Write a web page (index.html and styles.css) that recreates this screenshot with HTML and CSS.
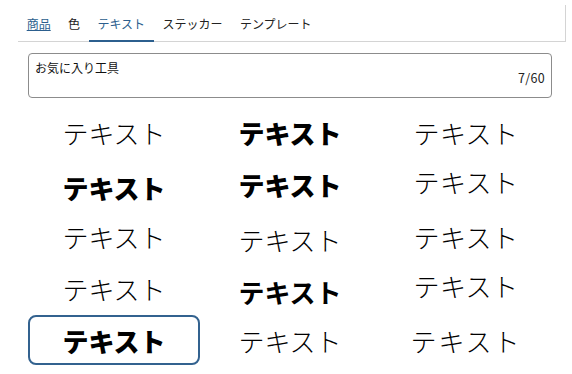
FILE: index.html
```html
<!DOCTYPE html>
<html lang="ja">
<head>
    <meta charset="UTF-8">
    <meta name="viewport" content="width=device-width, initial-scale=1.0">
    <title>テキスト</title>
    <link rel="stylesheet" href="styles.css">
</head>
<body>
    <!-- Tabs -->
    <div class="tabs">
        <a class="tab tab-link">商品</a>
        <a class="tab">色</a>
        <a class="tab active">テキスト</a>
        <a class="tab">ステッカー</a>
        <a class="tab">テンプレート</a>
    </div>

    <!-- Text input -->
    <div class="field">
        <span class="field-value">お気に入り工具</span>
        <span class="counter">7/60</span>
    </div>

    <!-- Font styles -->
    <div class="styles">
        <div class="style f-light">テキスト</div>
        <div class="style f-black">テキスト</div>
        <div class="style f-thin">テキスト</div>

        <div class="style f-black down">テキスト</div>
        <div class="style f-black">テキスト</div>
        <div class="style f-thin up">テキスト</div>

        <div class="style f-light">テキスト</div>
        <div class="style f-light down">テキスト</div>
        <div class="style f-thin">テキスト</div>

        <div class="style f-light">テキスト</div>
        <div class="style f-bold down">テキスト</div>
        <div class="style f-thin up">テキスト</div>

        <div class="style f-black selected">テキスト</div>
        <div class="style f-light">テキスト</div>
        <div class="style f-thin wide">テキスト</div>
    </div>
</body>
</html>
```

FILE: styles.css
```css
* {
    font-family: 'Noto Sans CJK JP', 'Noto Sans', sans-serif;
    box-sizing: border-box;
}

body {
    margin: 0;
    background: white;
    color: #111;
}

.tabs {
    display: flex;
    height: 37px;
    margin: 5px 6px 0 18px;
    border-bottom: 1px solid #d4d4d4;
    border-right: 1px solid #d4d4d4;
}

.tab {
    display: flex;
    align-items: center;
    padding: 2px 8.7px 0;
    font-size: 12px;
    color: #222;
    margin-bottom: -1px;
    border-bottom: 2px solid transparent;
}

.tab-link {
    color: #2c5f8e;
    text-decoration: underline;
}

.tab.active {
    color: #2c5f8e;
    border-bottom-color: #2c5f8e;
}

.field {
    display: flex;
    align-items: flex-start;
    height: 45px;
    margin: 11px 20px 0 28px;
    padding: 5px 6px;
    border: 1px solid #8c8c8c;
    border-radius: 4px;
    font-size: 12px;
}

.counter {
    margin-left: auto;
    margin-top: 9px;
    font-size: 12.5px;
    letter-spacing: 0.3px;
    color: #222;
}

.styles {
    display: grid;
    grid-template-columns: repeat(3, 172px);
    grid-auto-rows: 50px;
    column-gap: 4px;
    row-gap: 2px;
    margin: 9px 20px 0 28px;
}

.style {
    display: flex;
    justify-content: center;
    align-items: center;
    font-size: 26px;
    color: #000;
    border: 2px solid transparent;
    border-radius: 8px;
}

.style.selected {
    border-color: #33628f;
}

.f-thin { font-weight: 300; letter-spacing: 0.5px; }
.f-light { font-weight: 300; }
.f-bold { font-weight: 700; }
.f-black { font-weight: 900; }

.up { padding-bottom: 6px; }
.down { padding-top: 6px; }
.wide { letter-spacing: 2px; }
```
